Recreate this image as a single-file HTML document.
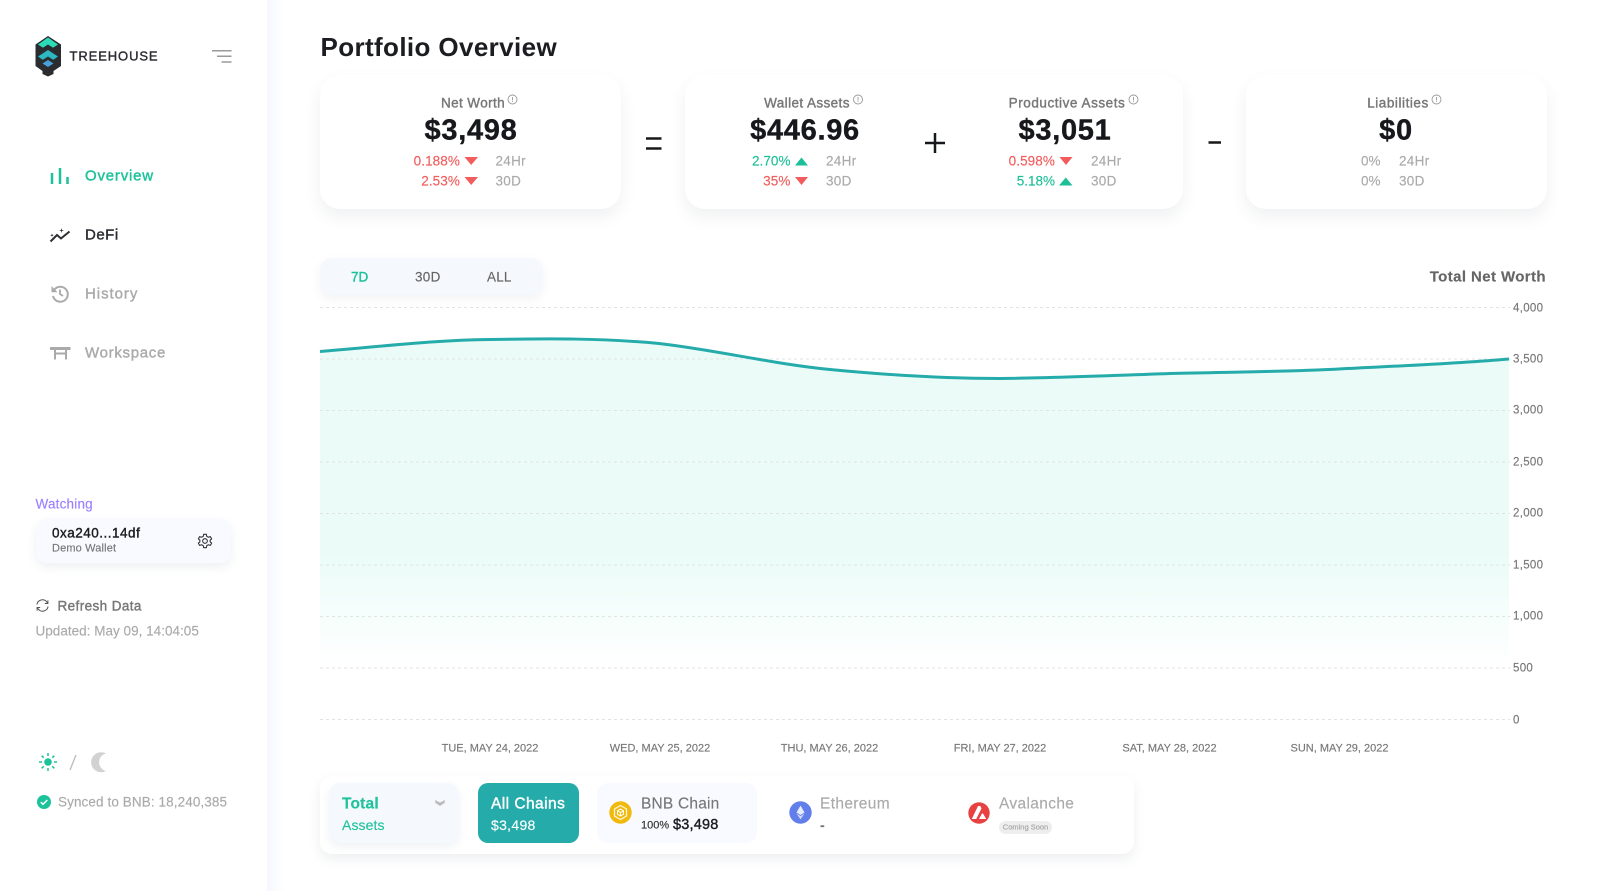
<!DOCTYPE html>
<html lang="en"><head><meta charset="utf-8"><title>Portfolio Overview</title>
<style>
html,body{margin:0;padding:0;background:#fff}
#p{position:relative;width:1600px;height:891px;overflow:hidden;background:#fff;font-family:"Liberation Sans",sans-serif}
.t{position:absolute;white-space:nowrap;transform:translateY(-50%);line-height:1;-webkit-text-stroke:.15px currentColor}
.c{transform:translate(-50%,-50%)}
.r{transform:translate(-100%,-50%)}
.m{-webkit-text-stroke:.4px currentColor}
.b{position:absolute;box-sizing:border-box}
.card{background:#fff;border-radius:20px;box-shadow:0 8px 16px rgba(60,80,90,.08);top:75px;height:134px}
svg{position:absolute;overflow:visible}
.red{color:#f25c5c}.grn{color:#1dbf98}.gr{color:#aaa}
.s13{font-size:13.5px}
.lab{font-size:13.5px;color:#777;letter-spacing:.4px}
.val{font-size:29px;font-weight:bold;color:#17181c;letter-spacing:.7px;-webkit-text-stroke:.4px currentColor}
.y{font-size:11.5px;color:#777;left:1513px;letter-spacing:.3px}
.x{font-size:11px;color:#777}
</style></head><body><div id="p">

<div class="b" style="left:267px;top:0;width:18px;height:891px;background:linear-gradient(90deg,#f6f8fe,#fff)"></div>

<!-- logo -->
<svg style="left:0;top:0" width="70" height="80" viewBox="0 0 70 80">
<path d="M48 36 61 44.500V66L53.500 71V74L48 76.500 42.500 74V71L35.500 66V44.500Z" fill="#2b2c30"/>
<path d="M48 37.500 58 44.500 48 51 38 44.500Z" fill="#2bdcb9"/>
<path d="M48 44.500 53.500 48 48 51.500 42.500 48Z" fill="#2b2c30"/>
<path d="M48 50 58 56.500 48 63.500 38 56.500Z" fill="#2bb8c0"/>
<path d="M48 56.500 53.500 60 48 63.500 42.500 60Z" fill="#2b2c30"/>
<path d="M48 60 53.500 63.500 48 67 42.500 63.500Z" fill="#4a9fd8"/>
</svg>
<div class="t m" style="left:69.500px;top:55.500px;font-size:13px;color:#2d2e33;letter-spacing:.9px">TREEHOUSE</div>
<svg style="left:0;top:0" width="240" height="70"><path d="M212 50.700H231.500M217 56.300H231.500M221.500 62H231.500" stroke="#9a9a9a" stroke-width="1.500" fill="none"/></svg>

<!-- nav -->
<svg style="left:0;top:0" width="80" height="370" fill="none">
<path d="M52 173V184M60 168V184M67.500 177V184" stroke="#1cc29a" stroke-width="2.500"/>
<path d="M50.500 241.500 57 235 61 238.500 69.500 231.500" stroke="#2d2e33" stroke-width="2"/>
<path d="M61.500 228 62 230 64 230.500 62 231 61.500 233 61 231 59 230.500 61 230ZM52 233.500l.5 1.200 1.200.5-1.200.5-.5 1.200-.5-1.200-1.200-.5 1.200-.5Z" fill="#2d2e33"/>
<path d="M54.500 289.500A7.500 7.500 0 1 1 53 296" stroke="#aaa" stroke-width="2"/>
<path d="M51.500 286V292.300H57.500Z" fill="#aaa"/>
<path d="M60 289.500V294L63 296" stroke="#aaa" stroke-width="1.800"/>
<path d="M50 348.500H70.500" stroke="#aaa" stroke-width="3"/>
<path d="M55 350V359.500M66 350V359.500M55 353.500H66" stroke="#aaa" stroke-width="2"/>
</svg>
<div class="t m" style="left:85px;top:176px;font-size:15px;color:#1cc29a;letter-spacing:.8px">Overview</div>
<div class="t m" style="left:85px;top:235px;font-size:15px;color:#2d2e33;letter-spacing:.5px">DeFi</div>
<div class="t m" style="left:85px;top:294px;font-size:15px;color:#aaa;letter-spacing:.95px">History</div>
<div class="t m" style="left:85px;top:353px;font-size:15px;color:#aaa;letter-spacing:.7px">Workspace</div>

<!-- wallet -->
<div class="t" style="left:35.500px;top:504px;font-size:13.500px;color:#9a80ff;letter-spacing:.2px">Watching</div>
<div class="b" style="left:36px;top:519px;width:195px;height:44px;border-radius:11px;background:#f8faff;box-shadow:0 4px 10px rgba(70,90,110,.09)"></div>
<div class="t m" style="left:52px;top:533px;font-size:13.500px;color:#1c1d21;letter-spacing:.5px">0xa240...14df</div>
<div class="t" style="left:52px;top:549px;font-size:11px;color:#777;letter-spacing:.15px">Demo Wallet</div>
<svg style="left:197px;top:533px" width="16" height="16" viewBox="0 0 24 24" fill="none" stroke="#2d2e33" stroke-width="1.600" stroke-linejoin="round"><circle cx="12" cy="12" r="3.500"/><path d="M10 2H14L14.600 5 17 6.400 20 5.400 22 8.800 19.700 10.800V13.200L22 15.200 20 18.600 17 17.600 14.600 19 14 22H10L9.400 19 7 17.600 4 18.600 2 15.200 4.300 13.200V10.800L2 8.800 4 5.400 7 6.400 9.400 5Z"/></svg>
<svg style="left:36px;top:599px" width="13" height="13" viewBox="0 0 14 14" fill="none" stroke="#555" stroke-width="1.100"><path d="M1 6A6 6 0 0 1 11.500 3L12.500 4.500M13 8A6 6 0 0 1 2.500 11L1.500 9.500"/><path d="M12.800 1.500V4.800H9.500M1.200 12.500V9.200H4.500"/></svg>
<div class="t m" style="left:57.500px;top:605.500px;font-size:13.500px;color:#777;letter-spacing:.4px">Refresh Data</div>
<div class="t" style="left:35.500px;top:631px;font-size:13.500px;color:#aaa;letter-spacing:.02px">Updated: May 09, 14:04:05</div>

<svg style="left:36px;top:750px" width="80" height="26" fill="none">
<circle cx="12" cy="12" r="3.800" fill="#1cc29a"/>
<path d="M12 3V6M12 18V21M3 12H6M18 12H21M5.700 5.700 7.700 7.700M16.300 16.300 18.300 18.300M5.700 18.300 7.700 16.300M16.300 7.700 18.300 5.700" stroke="#1cc29a" stroke-width="1.500"/>
<path d="M70 3.500A10 10 0 1 0 70 21A9 9 0 0 1 70 3.500Z" fill="#d2d2d2"/>
</svg>
<svg style="left:66px;top:752px" width="14" height="20"><path d="M4 18 10 3" stroke="#bbb" stroke-width="1.300" fill="none"/></svg>
<svg style="left:37px;top:795px" width="14" height="14"><circle cx="7" cy="7" r="7" fill="#1cc29a"/><path d="M3.800 7.200 6 9.300 10.300 5" stroke="#fff" stroke-width="1.500" fill="none"/></svg>
<div class="t" style="left:58px;top:802px;font-size:13.500px;color:#aaa;letter-spacing:.1px">Synced to BNB: 18,240,385</div>

<!-- title -->
<div class="t" style="left:320.500px;top:47px;font-size:26px;font-weight:bold;color:#1c1d21;letter-spacing:.38px;-webkit-text-stroke:0">Portfolio Overview</div>

<!-- cards -->
<div class="b card" style="left:320px;width:301px"></div>
<div class="b card" style="left:685px;width:498px"></div>
<div class="b card" style="left:1246px;width:301px"></div>

<svg style="left:0;top:0" width="1600" height="220" fill="none" stroke="#999" stroke-width=".9">
<circle cx="512.500" cy="99.500" r="4.500"/><path d="M512.500 97V100.500M512.500 101.300V102"/>
<circle cx="858" cy="99.500" r="4.500"/><path d="M858 97V100.500M858 101.300V102"/>
<circle cx="1133.500" cy="99.500" r="4.500"/><path d="M1133.500 97V100.500M1133.500 101.300V102"/>
<circle cx="1436.500" cy="99.500" r="4.500"/><path d="M1436.500 97V100.500M1436.500 101.300V102"/>
<g stroke="none" fill="#f25c5c">
<path d="M464.500 157H478L471.200 165ZM464.500 177H478L471.200 185ZM795 177H808L801.500 185ZM1059.500 157H1072.500L1066 165Z"/>
</g>
<g stroke="none" fill="#1dbf98">
<path d="M795 165.500H808L801.500 157.500ZM1059 185.500H1072.500L1065.800 177.500Z"/>
</g>
<g stroke="#17181c" stroke-width="2.500"><path d="M646 138.500H661.500M646 148.500H661.500"/></g>
<g stroke="#17181c" stroke-width="2.500"><path d="M925 143H945M935 133V153"/></g>
<path d="M1208.500 142.500H1221" stroke="#17181c" stroke-width="2.500"/>
</svg>

<div class="t c lab m" style="left:473px;top:103px">Net Worth</div>
<div class="t c val" style="left:471px;top:130.500px">$3,498</div>
<div class="t r s13 red" style="left:460px;top:161px;letter-spacing:.1px">0.188%</div>
<div class="t r s13 red" style="left:460px;top:181px;letter-spacing:.1px">2.53%</div>
<div class="t s13 gr" style="left:495.500px;top:161px;letter-spacing:.3px">24Hr</div>
<div class="t s13 gr" style="left:495.500px;top:181px;letter-spacing:.3px">30D</div>

<div class="t c lab m" style="left:807px;top:103px">Wallet Assets</div>
<div class="t c val" style="left:805px;top:130.500px">$446.96</div>
<div class="t r s13 grn" style="left:790.500px;top:161px;letter-spacing:.05px">2.70%</div>
<div class="t r s13 red" style="left:790.500px;top:181px;letter-spacing:.1px">35%</div>
<div class="t s13 gr" style="left:826px;top:161px;letter-spacing:.3px">24Hr</div>
<div class="t s13 gr" style="left:826px;top:181px;letter-spacing:.3px">30D</div>

<div class="t c lab m" style="left:1067px;top:103px;letter-spacing:.55px">Productive Assets</div>
<div class="t c val" style="left:1065px;top:130.500px">$3,051</div>
<div class="t r s13 red" style="left:1055px;top:161px;letter-spacing:.1px">0.598%</div>
<div class="t r s13 grn" style="left:1055px;top:181px;letter-spacing:0">5.18%</div>
<div class="t s13 gr" style="left:1091px;top:161px;letter-spacing:.3px">24Hr</div>
<div class="t s13 gr" style="left:1091px;top:181px;letter-spacing:.3px">30D</div>

<div class="t c lab m" style="left:1398px;top:103px;letter-spacing:.55px">Liabilities</div>
<div class="t c val" style="left:1396px;top:130.500px">$0</div>
<div class="t r s13 gr" style="left:1380.500px;top:161px">0%</div>
<div class="t r s13 gr" style="left:1380.500px;top:181px">0%</div>
<div class="t s13 gr" style="left:1399px;top:161px;letter-spacing:.3px">24Hr</div>
<div class="t s13 gr" style="left:1399px;top:181px;letter-spacing:.3px">30D</div>

<!-- tabs -->
<div class="b" style="left:320px;top:258px;width:223px;height:37px;border-radius:12px;background:#f5f8fd;box-shadow:0 4px 10px rgba(70,90,110,.07)"></div>
<div class="t m" style="left:351px;top:276.500px;font-size:13.500px;color:#1cc29a">7D</div>
<div class="t" style="left:415px;top:276.500px;font-size:13.500px;color:#666;letter-spacing:.3px">30D</div>
<div class="t" style="left:487px;top:276.500px;font-size:13.500px;color:#666;letter-spacing:.2px">ALL</div>
<div class="t r" style="left:1546px;top:277px;font-size:15px;font-weight:bold;color:#666;letter-spacing:.4px">Total Net Worth</div>

<!-- chart -->
<svg style="left:0;top:0" width="1600" height="760" fill="none">
<defs><linearGradient id="g" x1="0" y1="339" x2="0" y2="719" gradientUnits="userSpaceOnUse">
<stop offset="0" stop-color="#ebfcf8"/><stop offset=".57" stop-color="#ebfcf8"/><stop offset=".86" stop-color="#fff"/></linearGradient></defs>
<path d="M320 351.500C377 347 433 340 490 339.500C547 338.500 603 338 659 343.500C716 350 773 364 830 369.500C887 375 943 378.500 1000 378.500C1057 378 1113 375.500 1170 373.500C1227 372 1283 372 1339 369C1396 366 1452 364 1509 359V719H320Z" fill="url(#g)"/>
<g stroke="#dfe5e4" stroke-width="1" stroke-dasharray="3 3">
<path d="M320 307.500H1510M320 359H1510M320 410.500H1510M320 462H1510M320 513.500H1510M320 565H1510M320 616.500H1510M320 668H1510M320 719.500H1510"/>
</g>
<path d="M320 351.500C377 347 433 340 490 339.500C547 338.500 603 338 659 343.500C716 350 773 364 830 369.500C887 375 943 378.500 1000 378.500C1057 378 1113 375.500 1170 373.500C1227 372 1283 372 1339 369C1396 366 1452 364 1509 359" stroke="#26abab" stroke-width="3"/>
</svg>
<div class="t y" style="top:308.500px">4,000</div>
<div class="t y" style="top:359.500px">3,500</div>
<div class="t y" style="top:411px">3,000</div>
<div class="t y" style="top:462.500px">2,500</div>
<div class="t y" style="top:514px">2,000</div>
<div class="t y" style="top:565.500px">1,500</div>
<div class="t y" style="top:617px">1,000</div>
<div class="t y" style="top:668.500px">500</div>
<div class="t y" style="top:720.500px">0</div>
<div class="t c x" style="left:490px;top:748.500px">TUE, MAY 24, 2022</div>
<div class="t c x" style="left:660px;top:748.500px">WED, MAY 25, 2022</div>
<div class="t c x" style="left:829.500px;top:748.500px">THU, MAY 26, 2022</div>
<div class="t c x" style="left:1000px;top:748.500px">FRI, MAY 27, 2022</div>
<div class="t c x" style="left:1169.500px;top:748.500px">SAT, MAY 28, 2022</div>
<div class="t c x" style="left:1339.500px;top:748.500px">SUN, MAY 29, 2022</div>

<!-- bottom bar -->
<div class="b" style="left:320px;top:776px;width:814px;height:78px;border-radius:12px;background:#fff;box-shadow:0 5px 12px rgba(60,80,90,.09)"></div>
<div class="b" style="left:329px;top:783px;width:130px;height:60px;border-radius:11px;background:#f5f8fd;box-shadow:0 4px 9px rgba(70,90,110,.08)"></div>
<div class="t" style="left:342px;top:803.500px;font-size:15.500px;font-weight:bold;color:#1fc29c;letter-spacing:.2px">Total</div>
<div class="t" style="left:342px;top:825px;font-size:14px;color:#1fc29c;letter-spacing:.1px">Assets</div>
<svg style="left:434px;top:799px" width="12" height="8"><path d="M1 1 6 3.500 11 1 10.500 4 6 7 1.500 4Z" fill="#bbb"/></svg>
<div class="b" style="left:478px;top:783px;width:101px;height:60px;border-radius:10px;background:#26abab"></div>
<div class="t m" style="left:491px;top:803.500px;font-size:15.500px;color:#fff;letter-spacing:.45px">All Chains</div>
<div class="t" style="left:491px;top:825px;font-size:14px;color:#fff;letter-spacing:.3px">$3,498</div>
<div class="b" style="left:597px;top:783px;width:160px;height:60px;border-radius:11px;background:#f8faff"></div>
<svg style="left:609px;top:801px" width="23" height="23" viewBox="0 0 23 23" fill="none"><circle cx="11.500" cy="11.500" r="11.200" fill="#f0b90b"/><path d="M11.500 4.500 17.500 8V15L11.500 18.500 5.500 15V8Z" stroke="#fff" stroke-width="1.300" stroke-opacity=".85"/><path d="M11.500 8 14.500 9.800V13.200L11.500 15 8.500 13.200V9.800ZM8.500 9.800 11.500 11.500 14.500 9.800M11.500 11.500V15" stroke="#fff" stroke-width="1"/></svg>
<div class="t" style="left:641px;top:803.500px;font-size:15.500px;color:#777;letter-spacing:.2px">BNB Chain</div>
<div class="t" style="left:641px;top:826px;font-size:11px;color:#333">100%</div>
<div class="t m" style="left:673px;top:825px;font-size:14.500px;color:#1c1d21;letter-spacing:.2px">$3,498</div>
<svg style="left:789px;top:801px" width="23" height="23" viewBox="0 0 23 23"><circle cx="11.500" cy="11.500" r="11.200" fill="#627eea"/><path d="M11.500 4.500 7.500 11.500 11.500 14 15.500 11.500Z" fill="#fff" fill-opacity=".85"/><path d="M7.500 12.500 11.500 18.500 15.500 12.500 11.500 15Z" fill="#fff" fill-opacity=".7"/></svg>
<div class="t" style="left:820px;top:803.500px;font-size:15.500px;color:#aaa;letter-spacing:.35px">Ethereum</div>
<div class="t" style="left:820px;top:825px;font-size:14px;font-weight:bold;color:#777">-</div>
<svg style="left:968px;top:802px" width="22" height="22" viewBox="0 0 22 22"><circle cx="11" cy="11" r="10.700" fill="#e84142"/><path d="M10 4H12.300L13.500 6.500 8.200 17H3.800ZM14 11.500H15L18.200 17H11Z" fill="#fff"/></svg>
<div class="t" style="left:999px;top:803.500px;font-size:15.500px;color:#aaa;letter-spacing:.35px">Avalanche</div>
<div class="b" style="left:999px;top:821px;width:53px;height:13px;border-radius:7px;background:#eee"></div>
<div class="t c m" style="left:1025.500px;top:827px;font-size:7.500px;color:#aaa;-webkit-text-stroke:.2px #aaa">Coming Soon</div>

</div></body></html>
